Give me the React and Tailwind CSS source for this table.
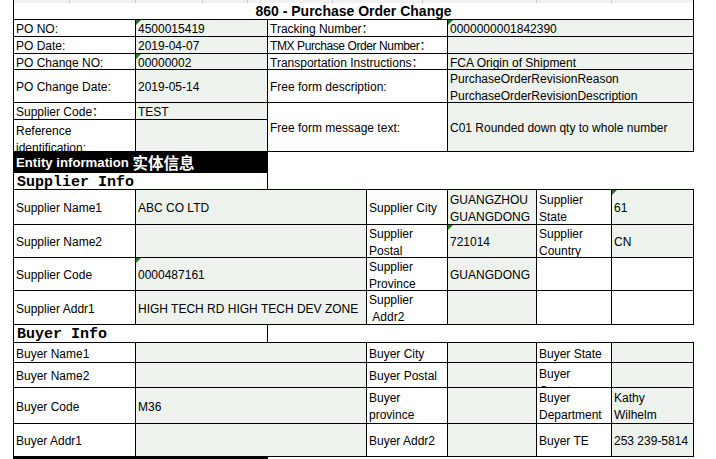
import React from "react";

const font = "font-['Liberation_Sans','Noto_Sans_CJK_SC',Arial,sans-serif]";

function Cell({ children, g, tri, top, className = "" }) {
  return (
    <div
      className={`relative flex overflow-hidden pl-[2px] pt-[3px] ${top ? "items-start" : "items-center"} ${g ? "bg-[#edf3ec]" : "bg-white"} ${className}`}
    >
      {tri && (
        <span className="absolute left-0 top-0 h-0 w-0 border-r-[5px] border-t-[5px] border-r-transparent border-t-[#1f7a1f]" />
      )}
      <div className="whitespace-nowrap">{children}</div>
    </div>
  );
}

function Strip() {
  const segs = [56, 66, 67, 45, 85, 90, 114, 75, 81];
  return (
    <div className="flex h-[3px] bg-[#f1f1f1]">
      {segs.map((w, i) => (
        <div
          key={i}
          style={{ width: w }}
          className={i < segs.length - 1 ? "border-r border-[#c8c8c8]" : ""}
        />
      ))}
    </div>
  );
}

function App() {
  return (
    <div className={`h-[459px] w-[716px] overflow-hidden bg-white text-[12px] leading-[17px] text-black ${font}`}>
      <div className="ml-[13px] w-[681px]">
        {/* title */}
        <div className="border-x border-black">
          <Strip />
          <div className="flex h-[16px] items-center justify-center pt-[1px] text-[14px] font-bold">
            860 - Purchase Order Change
          </div>
        </div>

        {/* header info */}
        <div className="grid grid-cols-[121px_131px_179px_245px] grid-rows-[16px_16px_15px_32px_16px_31px] gap-px bg-black p-px">
          <Cell>PO NO:</Cell>
          <Cell g tri>4500015419</Cell>
          <Cell>Tracking Number：</Cell>
          <Cell g tri>0000000001842390</Cell>

          <Cell>PO Date:</Cell>
          <Cell g>2019-04-07</Cell>
          <Cell className="tracking-[-0.4px]">TMX Purchase Order Number：</Cell>
          <Cell g />

          <Cell>PO Change NO:</Cell>
          <Cell g tri>00000002</Cell>
          <Cell>Transportation Instructions：</Cell>
          <Cell g>FCA Origin of Shipment</Cell>

          <Cell>PO Change Date:</Cell>
          <Cell g>2019-05-14</Cell>
          <Cell>Free form description:</Cell>
          <Cell g>
            PurchaseOrderRevisionReason
            <br />
            PurchaseOrderRevisionDescription
          </Cell>

          <Cell>Supplier Code：</Cell>
          <Cell g>TEST</Cell>
          <Cell className="row-span-2">Free form message text:</Cell>
          <Cell g className="row-span-2">C01 Rounded down qty to whole number</Cell>

          <Cell top>
            Reference
            <br />
            identification:
          </Cell>
          <Cell g />
        </div>

        {/* entity section */}
        <div className="w-[255px]">
          <div className="flex h-[21px] items-center bg-black pl-[3px] text-[13.2px] font-bold text-white">
            Entity information&nbsp;
            <span className="font-['Noto_Sans_CJK_SC',sans-serif] text-[15.5px]">实体信息</span>
          </div>
          <div className="flex h-[16px] items-center border-x border-black pl-[3px] pt-[2px] font-['Liberation_Mono',monospace] text-[15px] font-bold">
            Supplier Info
          </div>
        </div>

        {/* supplier table */}
        <div className="grid grid-cols-[121px_230px_80px_88px_74px_81px] grid-rows-[34px_32px_32px_33px] gap-px bg-black p-px">
          <Cell>Supplier Name1</Cell>
          <Cell g>ABC CO LTD</Cell>
          <Cell>Supplier City</Cell>
          <Cell g>
            GUANGZHOU
            <br />
            GUANGDONG
          </Cell>
          <Cell>
            Supplier
            <br />
            State
          </Cell>
          <Cell g tri>61</Cell>

          <Cell>Supplier Name2</Cell>
          <Cell g />
          <Cell>
            Supplier
            <br />
            Postal
          </Cell>
          <Cell g tri>721014</Cell>
          <Cell>
            Supplier
            <br />
            Country
          </Cell>
          <Cell g>CN</Cell>

          <Cell>Supplier Code</Cell>
          <Cell g tri>0000487161</Cell>
          <Cell>
            Supplier
            <br />
            Province
          </Cell>
          <Cell g>GUANGDONG</Cell>
          <Cell />
          <Cell />

          <Cell>Supplier Addr1</Cell>
          <Cell g>HIGH TECH RD HIGH TECH DEV ZONE</Cell>
          <Cell>
            Supplier
            <br />
            &nbsp;Addr2
          </Cell>
          <Cell g />
          <Cell />
          <Cell />
        </div>

        {/* buyer heading */}
        <div className="flex h-[17px] w-[255px] items-center border-x border-black pl-[3px] pt-[2px] font-['Liberation_Mono',monospace] text-[15px] font-bold">
          Buyer Info
        </div>

        {/* buyer table */}
        <div className="grid grid-cols-[121px_230px_80px_88px_74px_81px] grid-rows-[19px_24px_35px_32px] gap-px bg-black p-px">
          <Cell>Buyer Name1</Cell>
          <Cell g />
          <Cell>Buyer City</Cell>
          <Cell g />
          <Cell>Buyer State</Cell>
          <Cell g />

          <Cell>Buyer Name2</Cell>
          <Cell g />
          <Cell>Buyer Postal</Cell>
          <Cell g />
          <Cell top>
            Buyer
            <br />
            Country
          </Cell>
          <Cell g />

          <Cell>Buyer Code</Cell>
          <Cell g>M36</Cell>
          <Cell>
            Buyer
            <br />
            province
          </Cell>
          <Cell g />
          <Cell>
            Buyer
            <br />
            Department
          </Cell>
          <Cell g>
            Kathy
            <br />
            Wilhelm
          </Cell>

          <Cell>Buyer Addr1</Cell>
          <Cell g />
          <Cell>Buyer Addr2</Cell>
          <Cell g />
          <Cell>Buyer TE</Cell>
          <Cell g>253 239-5814</Cell>
        </div>

        <div className="h-[3px] w-[255px] bg-black" />
      </div>
    </div>
  );
}

export default App;
